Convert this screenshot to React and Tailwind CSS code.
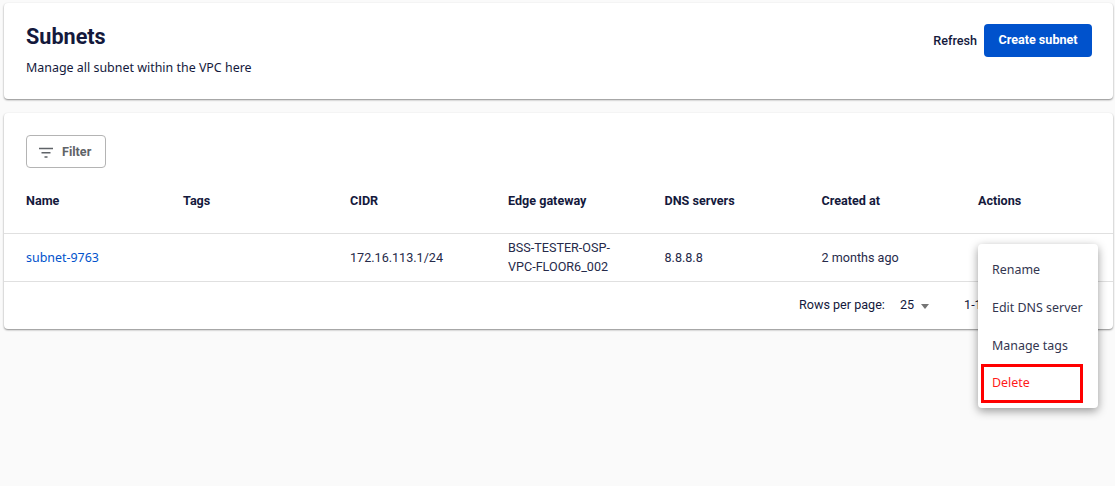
import React from 'react';

const columns = ['Name', 'Tags', 'CIDR', 'Edge gateway', 'DNS servers', 'Created at', 'Actions'];
const gridCols = 'grid grid-cols-[157px_167px_158px_156.5px_157px_156.5px_1fr]';

const FilterIcon = () => (
    <svg width="16" height="12" viewBox="0 0 16 12" fill="none" stroke="#5f6368" strokeWidth="1.4">
        <path d="M1 1.5h14M3.5 5.8h9M6.5 10h3" />
    </svg>
);

const App = () => {
    return (
        <div className="relative h-[486px] w-[1115px] overflow-hidden bg-[#fafafa] px-1 pt-[3px] font-['Roboto',sans-serif] text-[#14193c]">
            {/* Header */}
            <div className="flex h-[96px] w-[1109px] justify-between rounded bg-white pl-[22px] pr-[21px] pt-[21px] shadow-[0_1px_2px_rgba(0,0,0,0.45)]">
                <div>
                    <h1 className="text-[21.6px] font-bold leading-[26px]">Subnets</h1>
                    <p className="mt-[9px] font-['Noto_Sans',sans-serif] text-[12.45px] leading-[18px]">Manage all subnet within the VPC here</p>
                </div>
                <div className="flex h-[33px] items-center gap-[7px]">
                    <span className="pt-[2px] text-[12.6px] font-medium">Refresh</span>
                    <button className="h-[33px] w-[108px] rounded bg-[#0052cc] text-[12.6px] font-bold text-white">Create subnet</button>
                </div>
            </div>

            {/* Table card */}
            <div className="mt-[14px] h-[216px] w-[1109px] rounded bg-white shadow-[0_1px_2px_rgba(0,0,0,0.45)]">
                <div className="px-[22px] pt-[22px]">
                    <button className="flex h-[33px] w-[80px] items-center gap-[8px] rounded border border-[#b4b4b4] pl-[11px] pt-[2px] text-[12.6px] font-bold text-[#5f6368]">
                        <FilterIcon />
                        Filter
                    </button>
                </div>
                <div className={`${gridCols} mt-0 h-[66px] border-b border-[#e0e0e0] pl-[22px] pt-[25px] text-[12.6px] font-bold leading-[16px]`}>
                    {columns.map(col => (
                        <div key={col}>{col}</div>
                    ))}
                </div>
                <div className={`${gridCols} h-[48px] items-center border-b border-[#e0e0e0] pl-[22px] pt-[2px] text-[12.6px] text-[#262a4a]`}>
                    <a className="font-['Noto_Sans',sans-serif] text-[12.45px] text-[#0052cc]">subnet-9763</a>
                    <div />
                    <div>172.16.113.1/24</div>
                    <div className="mb-[4px] w-[110px] text-[12.6px] leading-[19px]">BSS-TESTER-OSP-VPC-FLOOR6_002</div>
                    <div>8.8.8.8</div>
                    <div>2 months ago</div>
                    <div />
                </div>
                <div className="flex h-[47px] items-center pl-[795px] text-[12.6px]">
                    <span>Rows per page:</span>
                    <span className="ml-[15px]">25</span>
                    <span className="ml-[7px] mt-[2px] h-0 w-0 border-x-[4.5px] border-t-[5px] border-x-transparent border-t-[#757575]" />
                    <span className="ml-[35px]">1-1 of 1</span>
                </div>
            </div>

            {/* Actions menu */}
            <div className="absolute left-[978px] top-[244px] h-[164px] w-[120px] rounded bg-white pt-[7px] font-['Noto_Sans',sans-serif] text-[12.45px] text-[#33364f] shadow-[0_3px_10px_rgba(0,0,0,0.4)]">
                <div className="flex h-[38px] items-center pl-[14px]">Rename</div>
                <div className="flex h-[38px] items-center pl-[14px]">Edit DNS server</div>
                <div className="flex h-[37px] items-center pl-[14px] pt-[2px]">Manage tags</div>
                <div className="ml-[3px] flex h-[39px] w-[102px] items-center border-[3px] border-[#ff0000] pl-[8px] text-[#ff1a1a]">Delete</div>
            </div>
        </div>
    );
};

export default App;
